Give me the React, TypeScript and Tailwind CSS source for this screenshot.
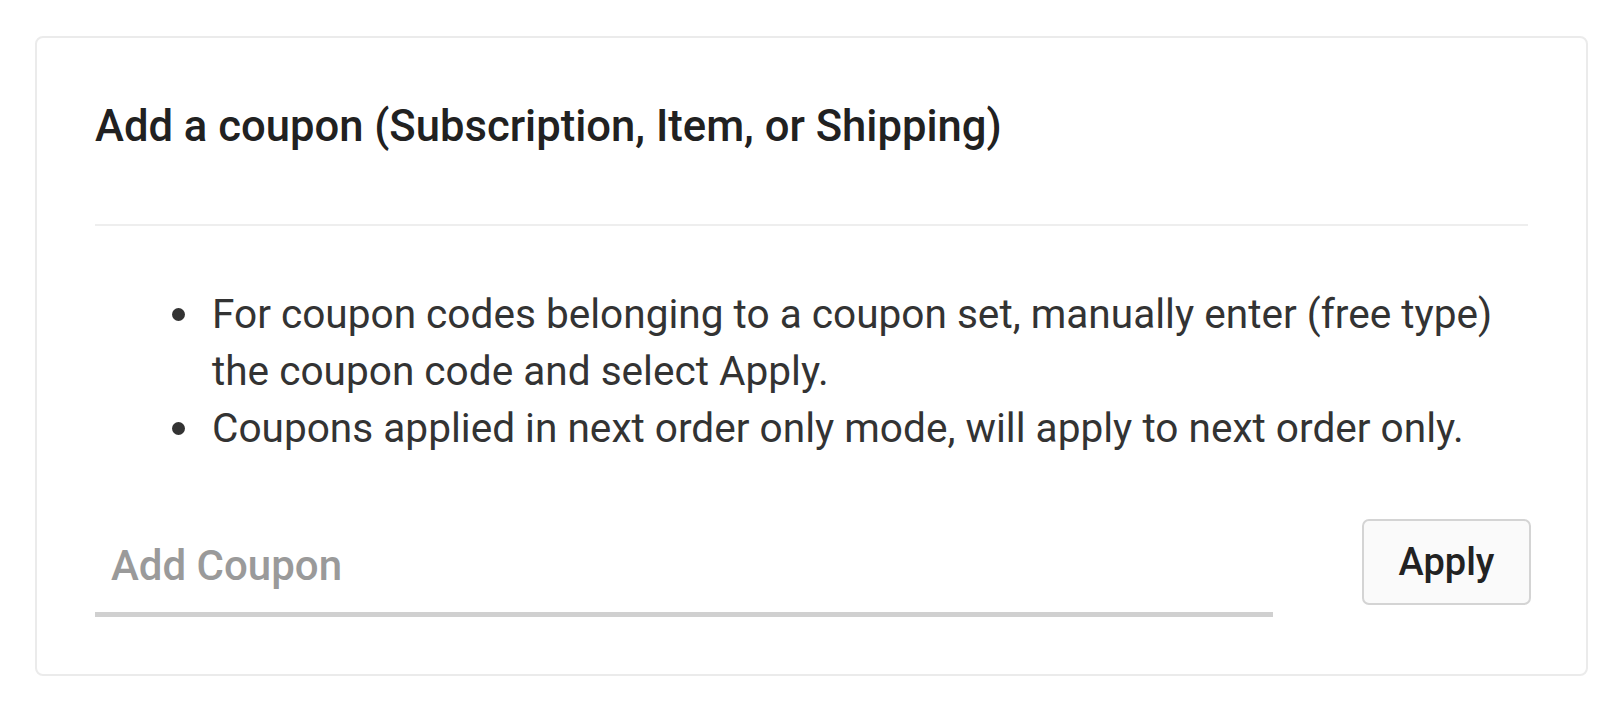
const notes = [
  "For coupon codes belonging to a coupon set, manually enter (free type) the coupon code and select Apply.",
  "Coupons applied in next order only mode, will apply to next order only.",
];

export default function App() {
  return (
    <div
      className="min-h-screen bg-white pt-[36px] pl-[35px]"
      style={{ fontFamily: "Roboto, 'Noto Sans', sans-serif" }}
    >
      <div className="box-border flex h-[640px] w-[1553px] flex-col rounded-[8px] border-2 border-[#ebebeb] px-[58px] pt-[62px] pb-[57px]">
        <h2 className="text-[43.6px] leading-[53px] font-medium text-[#212121]">
          Add a coupon (Subscription, Item, or Shipping)
        </h2>

        <div className="mt-[71px] h-[2px] w-full bg-[#eeeeee]" />

        <ul className="mt-[60px] pl-[77px] text-[40.6px] leading-[57px] text-[#333333]">
          {notes.map((note) => (
            <li key={note} className="flex">
              <span className="mt-[22px] mr-[27px] h-[13px] w-[13px] shrink-0 rounded-full bg-[#333333]" />
              <span>{note}</span>
            </li>
          ))}
        </ul>

        <div className="mt-[62px] flex items-start justify-between">
          <input
            type="text"
            placeholder="Add Coupon"
            className="box-border h-[98px] w-[1178px] border-b-[5px] border-[#d0d0d0] bg-transparent pl-[16px] text-[42px] font-medium text-[#333333] outline-none placeholder:text-[#9a9a9a]"
          />
          <button
            type="button"
            className="box-border -mr-[3px] h-[86px] w-[169px] rounded-[7px] border-2 border-[#d4d4d4] bg-[#fafafa] text-[38px] font-medium text-[#222222]"
          >
            Apply
          </button>
        </div>
      </div>
    </div>
  );
}
